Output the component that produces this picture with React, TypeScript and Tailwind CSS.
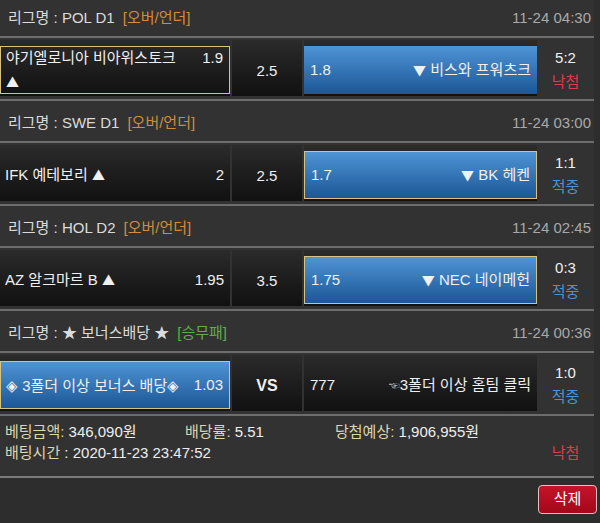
import React from "react";

type Pick = {
  text: string;
  odds: string;
  look: "none" | "gold" | "blue" | "both";
};

type Bet = {
  league: string;
  kind: string;
  kindClass: string;
  time: string;
  home: Pick;
  mid: string;
  away: Pick;
  score: string;
  result: "낙첨" | "적중";
};

const bets: Bet[] = [
  {
    league: "POL D1",
    kind: "[오버/언더]",
    kindClass: "text-[#d18d3d]",
    time: "11-24 04:30",
    home: { text: "야기엘로니아 비아위스토크 ▲", odds: "1.9", look: "gold" },
    mid: "2.5",
    away: { text: "▼ 비스와 프워츠크", odds: "1.8", look: "blue" },
    score: "5:2",
    result: "낙첨",
  },
  {
    league: "SWE D1",
    kind: "[오버/언더]",
    kindClass: "text-[#d18d3d]",
    time: "11-24 03:00",
    home: { text: "IFK 예테보리 ▲", odds: "2", look: "none" },
    mid: "2.5",
    away: { text: "▼ BK 헤켄", odds: "1.7", look: "both" },
    score: "1:1",
    result: "적중",
  },
  {
    league: "HOL D2",
    kind: "[오버/언더]",
    kindClass: "text-[#d18d3d]",
    time: "11-24 02:45",
    home: { text: "AZ 알크마르 B ▲", odds: "1.95", look: "none" },
    mid: "3.5",
    away: { text: "▼ NEC 네이메헌", odds: "1.75", look: "both" },
    score: "0:3",
    result: "적중",
  },
  {
    league: "★ 보너스배당 ★",
    kind: "[승무패]",
    kindClass: "text-[#62ad4b]",
    time: "11-24 00:36",
    home: { text: "◈ 3폴더 이상 보너스 배당◈", odds: "1.03", look: "both" },
    mid: "VS",
    away: { text: "3폴더 이상 홈팀 클릭", odds: "777", look: "none" },
    score: "1:0",
    result: "적중",
  },
];

// -------------------------
// Box look for a selected / highlighted pick
// -------------------------

function boxClass(look: Pick["look"]) {
  if (look === "blue") return "bg-linear-to-b from-[#4e94d5] to-[#1c5796]";
  if (look === "both")
    return "bg-linear-to-b from-[#4e94d5] to-[#1c5796] border-[1.5px] border-[#d8c27f]";
  if (look === "gold") return "border-[1.5px] border-[#d8c27f]";
  return "";
}

// arrows and diamonds look bigger in the original, take them from the CJK font
function PickText({ text }: { text: string }) {
  return (
    <>
      {text.split(/(▲|▼|◈)/).map((part, i) =>
        part === "▲" || part === "▼" || part === "◈" ? (
          <span
            key={i}
            className={`font-['Noto_Sans_CJK_KR',sans-serif] ${part === "◈" ? "text-[15px]" : "text-[13px]"}`}
          >
            {part}
          </span>
        ) : (
          <React.Fragment key={i}>{part}</React.Fragment>
        )
      )}
    </>
  );
}

function HomeCell({ pick }: { pick: Pick }) {
  const isBonus = pick.text.startsWith("◈");
  return (
    <div className="w-[230px] h-[56px] pt-[6px] pb-[2px] bg-linear-to-b from-[#2b2b2b] to-[#111111]">
      <div className={`h-full flex items-center pl-[5px] pr-[6px] ${boxClass(pick.look)}`}>
        <div className="flex w-full items-start justify-between gap-2">
          <span className={`leading-[24px] ${isBonus ? "whitespace-nowrap" : "max-w-[184px]"}`}>
            <PickText text={pick.text} />
          </span>
          <span className="shrink-0 leading-[24px]">{pick.odds}</span>
        </div>
      </div>
    </div>
  );
}

function AwayCell({ pick }: { pick: Pick }) {
  const isBonus = pick.odds === "777";
  return (
    <div className="w-[233px] h-[56px] pt-[6px] pb-[2px] bg-linear-to-b from-[#2b2b2b] to-[#111111]">
      <div className={`h-full flex items-center justify-between pl-[6px] pr-[6px] ${boxClass(pick.look)}`}>
        <span>{pick.odds}</span>
        <span className="whitespace-nowrap">
          {isBonus && <span className="text-[11px] text-[#bdbdbd] align-middle">☜</span>}
          <PickText text={pick.text} />
        </span>
      </div>
    </div>
  );
}

function BetBlock({ bet }: { bet: Bet }) {
  return (
    <div>
      {/* league header */}
      <div className="h-[42px] pt-[4px] pl-2 pr-[3px] flex items-center justify-between border-b-2 border-[#6d6d6d]">
        <div className="text-[#dcdcdc]">
          리그명 : {bet.league}
          <span className={`ml-2 ${bet.kindClass}`}>{bet.kind}</span>
        </div>
        <div className="text-[#a9a9a9]">{bet.time}</div>
      </div>

      {/* odds row */}
      <div className="flex pt-[2px] pb-[3px] border-b-2 border-[#6d6d6d] text-[#f0f0f0]">
        <HomeCell pick={bet.home} />
        <div className="ml-[2px] w-[70px] h-[56px] pt-[6px] bg-linear-to-b from-[#2b2b2b] to-[#111111] flex items-center justify-center">
          <span className={bet.mid === "VS" ? "font-bold text-[16px]" : ""}>{bet.mid}</span>
        </div>
        <div className="ml-[2px]">
          <AwayCell pick={bet.away} />
        </div>
        <div className="flex-1 flex flex-col items-center justify-center pt-[4px] leading-[24px]">
          <span>{bet.score}</span>
          <span className={bet.result === "낙첨" ? "text-[#de3d48]" : "text-[#4c92d4]"}>
            {bet.result}
          </span>
        </div>
      </div>
    </div>
  );
}

export default function App() {
  return (
    <div className="w-[600px] h-[523px] overflow-hidden bg-[#2d2d2d] font-['Liberation_Sans','Noto_Sans_CJK_KR',sans-serif] text-[15px]">
      <div className="w-[594px] bg-[#323232] -mt-[4px]">
        {bets.map((bet, i) => (
          <BetBlock key={i} bet={bet} />
        ))}

        {/* bet summary */}
        <div className="pl-[5px] pt-[5px] pb-[13px] leading-[21px] border-b-2 border-[#7a7a7a]">
          <div className="flex">
            <div className="w-[180px]">
              <span className="text-[#ddd6ae]">베팅금액:</span>
              <span className="text-[#eeeeee]"> 346,090원</span>
            </div>
            <div className="w-[150px]">
              <span className="text-[#ddd6ae]">배당률:</span>
              <span className="text-[#eeeeee]"> 5.51</span>
            </div>
            <div>
              <span className="text-[#ddd6ae]">당첨예상:</span>
              <span className="text-[#eeeeee]"> 1,906,955원</span>
            </div>
          </div>
          <div className="flex justify-between">
            <div>
              <span className="text-[#ddd6ae]">배팅시간</span>
              <span className="text-[#eeeeee]"> : 2020-11-23 23:47:52</span>
            </div>
            <span className="w-[57px] text-center text-[#de3d48]">낙첨</span>
          </div>
        </div>
      </div>

      <div className="flex justify-end pr-[3px] pt-[7px]">
        <button className="w-[59px] h-[29px] rounded-[4px] border-[1.5px] border-[#e6bfc3] bg-linear-to-b from-[#c4142a] to-[#a30818] text-white text-[15px]">
          삭제
        </button>
      </div>
    </div>
  );
}
